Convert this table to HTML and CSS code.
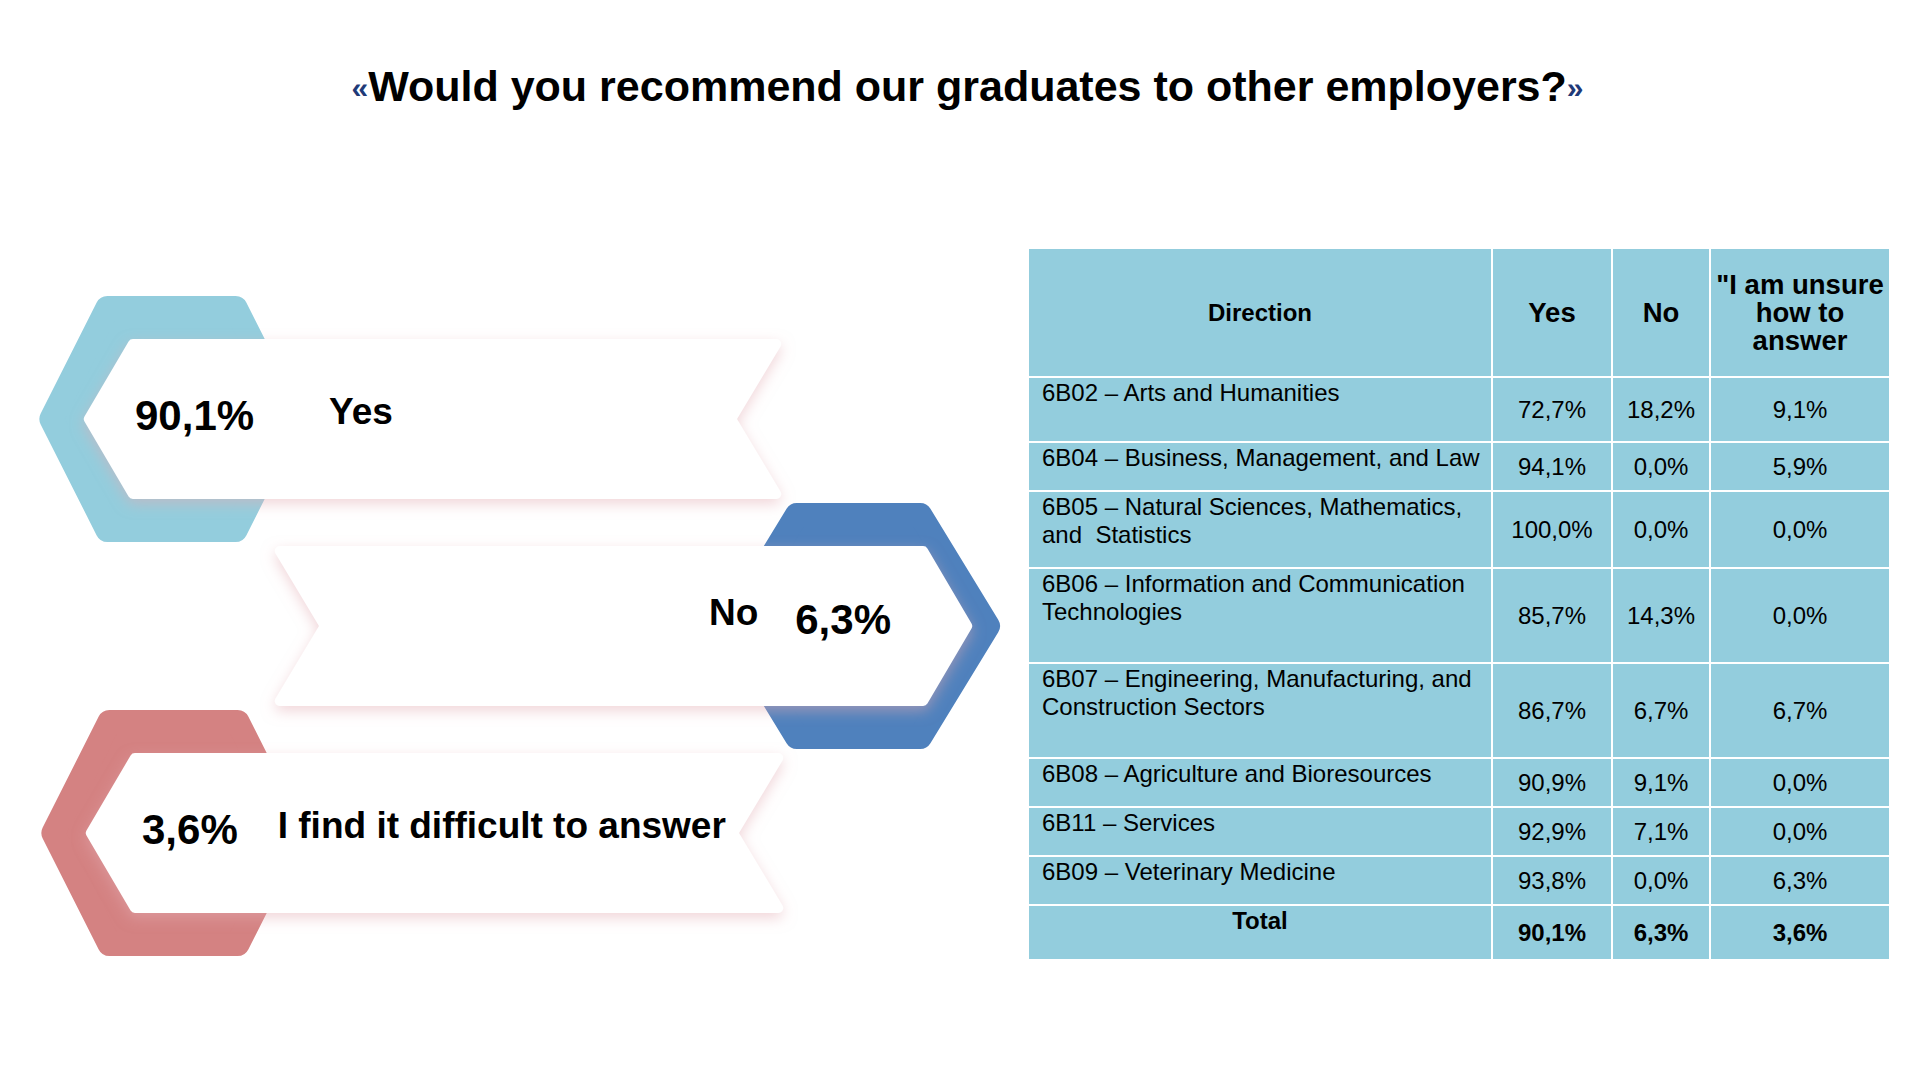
FILE: index.html
```html
<!DOCTYPE html>
<html lang="en">
<head>
<meta charset="utf-8">
<title>Would you recommend our graduates to other employers?</title>
<link rel="stylesheet" href="styles.css">
</head>
<body>
<div class="slide">
  <header class="title"><span class="q">«</span>Would you recommend our graduates to other employers?<span class="q">»</span></header>
  <main class="content">
    <section class="diagram">
      <svg class="shapes" viewBox="0 172 1027 808" width="1027" height="808" aria-hidden="true">
        <defs>
          <filter id="glow" x="-10%" y="-40%" width="120%" height="190%">
            <feDropShadow dx="0" dy="5" stdDeviation="7" flood-color="#e3aab2" flood-opacity="0.5"/>
          </filter>
        </defs>
        <g transform="translate(0 339)">
          <polygon class="hex hex-yes" points="51.4,80 107.4,-31 235.6,-31 291.6,80 235.6,191 107.4,191"/>
          <polygon class="banner" points="88.8,80 132.9,5 776.2,5 731.2,80 776.2,155 132.9,155"/>
        </g>
        <g transform="translate(0 546)">
          <polygon class="hex hex-no" points="729,80 796.8,-31 920.2,-31 988,80 920.2,191 796.8,191"/>
          <polygon class="banner" transform="translate(1056 0) scale(-1 1)" points="88.8,80 132.9,5 776.2,5 731.2,80 776.2,155 132.9,155"/>
        </g>
        <g transform="translate(2 753)">
          <polygon class="hex hex-hard" points="51.4,80 107.4,-31 235.6,-31 291.6,80 235.6,191 107.4,191"/>
          <polygon class="banner" points="88.8,80 132.9,5 776.2,5 731.2,80 776.2,155 132.9,155"/>
        </g>
      </svg>
      <div class="item item-yes"><span class="pct">90,1%</span><span class="label">Yes</span></div>
      <div class="item item-no"><span class="label">No</span><span class="pct">6,3%</span></div>
      <div class="item item-hard"><span class="pct">3,6%</span><span class="label">I find it difficult to answer</span></div>
    </section>
    <table class="results">
      <colgroup>
        <col class="c-dir"><col class="c-yes"><col class="c-no"><col class="c-uns">
      </colgroup>
      <thead>
        <tr class="r-head">
          <th>Direction</th>
          <th class="big">Yes</th>
          <th class="big">No</th>
          <th class="big">"I am unsure<br>how to<br>answer</th>
        </tr>
      </thead>
      <tbody>
        <tr class="r-a"><td class="dir">6B02 – Arts and Humanities</td><td>72,7%</td><td>18,2%</td><td>9,1%</td></tr>
        <tr class="r-b"><td class="dir">6B04 – Business, Management, and Law</td><td>94,1%</td><td>0,0%</td><td>5,9%</td></tr>
        <tr class="r-c"><td class="dir">6B05 – Natural Sciences, Mathematics,<br>and&nbsp; Statistics</td><td>100,0%</td><td>0,0%</td><td>0,0%</td></tr>
        <tr class="r-d"><td class="dir">6B06 – Information and Communication<br>Technologies</td><td>85,7%</td><td>14,3%</td><td>0,0%</td></tr>
        <tr class="r-d"><td class="dir">6B07 – Engineering, Manufacturing, and<br>Construction Sectors</td><td>86,7%</td><td>6,7%</td><td>6,7%</td></tr>
        <tr class="r-b"><td class="dir">6B08 – Agriculture and Bioresources</td><td>90,9%</td><td>9,1%</td><td>0,0%</td></tr>
        <tr class="r-b"><td class="dir">6B11 – Services</td><td>92,9%</td><td>7,1%</td><td>0,0%</td></tr>
        <tr class="r-b"><td class="dir">6B09 – Veterinary Medicine</td><td>93,8%</td><td>0,0%</td><td>6,3%</td></tr>
        <tr class="r-total"><td class="total-label">Total</td><td>90,1%</td><td>6,3%</td><td>3,6%</td></tr>
      </tbody>
    </table>
  </main>
</div>
</body>
</html>
```
FILE: styles.css
```css
html, body {
  margin: 0;
  padding: 0;
  background: #ffffff;
}

body {
  font-family: "Liberation Sans", Arial, sans-serif;
  color: #000;
}

.slide {
  width: 1920px;
  height: 1080px;
  overflow: hidden;
  background: #fff;
}

.title {
  height: 172px;
  box-sizing: border-box;
  display: flex;
  align-items: center;
  justify-content: center;
  padding-left: 15px;
  font-size: 43px;
  font-weight: bold;
  white-space: nowrap;
}

.title .q {
  font-size: 30px;
  font-weight: bold;
  color: #1f3a78;
  position: relative;
  top: 2px;
}

.content {
  display: flex;
  align-items: flex-start;
}

/* ---------- left diagram ---------- */
.diagram {
  position: relative;
  width: 1027px;
  height: 808px;
  flex: none;
  box-sizing: border-box;
  padding-top: 167px;
  display: flex;
  flex-direction: column;
  gap: 47px;
}

.shapes {
  position: absolute;
  left: 0;
  top: 0;
}

.hex {
  stroke-width: 24;
  stroke-linejoin: round;
}
.hex-yes { fill: #93cddd; stroke: #93cddd; }
.hex-no { fill: #4f81bd; stroke: #4f81bd; }
.hex-hard { fill: #d48282; stroke: #d48282; }

.banner {
  fill: #ffffff;
  stroke: #ffffff;
  stroke-width: 10;
  stroke-linejoin: round;
  filter: url(#glow);
}

.item {
  position: relative;
  height: 160px;
  box-sizing: border-box;
  display: flex;
  align-items: center;
  font-weight: bold;
  white-space: nowrap;
}

.pct {
  font-size: 42px;
}

.label {
  font-size: 37px;
  margin-bottom: 8px;
}

.item-yes {
  margin-left: 83px;
  width: 702px;
  padding-left: 52px;
  padding-bottom: 6px;
  gap: 75px;
}

.item-no {
  margin-left: 270px;
  width: 703px;
  justify-content: flex-end;
  padding-right: 82px;
  padding-bottom: 12px;
  gap: 37px;
}
.item-no .label {
  margin-bottom: 14px;
}

.item-hard {
  margin-left: 86px;
  width: 699px;
  padding-left: 56px;
  padding-bottom: 6px;
  gap: 40px;
}

/* ---------- table ---------- */
.results {
  margin-top: 75px;
  width: 862px;
  table-layout: fixed;
  border-collapse: collapse;
  background: #93cddd;
  font-size: 24px;
  line-height: 28px;
  flex: none;
}

.c-dir { width: 464px; }
.c-yes { width: 120px; }
.c-no { width: 98px; }
.c-uns { width: 180px; }

.results th,
.results td {
  border: 2px solid #ffffff;
  padding: 0 4px;
  text-align: center;
  vertical-align: middle;
}

.results th {
  font-weight: bold;
}

.results th.big {
  font-size: 27.5px;
  padding: 0 2px;
}

.results td.dir {
  text-align: left;
  vertical-align: top;
  padding: 1px 2px 0 13px;
  white-space: nowrap;
}

.r-head { height: 129px; }
.r-a { height: 65px; }
.r-b { height: 49px; }
.r-c { height: 77px; }
.r-d { height: 95px; }
.r-total { height: 55px; }

.r-total td {
  font-weight: bold;
}

.results td.total-label {
  vertical-align: top;
  padding-top: 1px;
}
```
